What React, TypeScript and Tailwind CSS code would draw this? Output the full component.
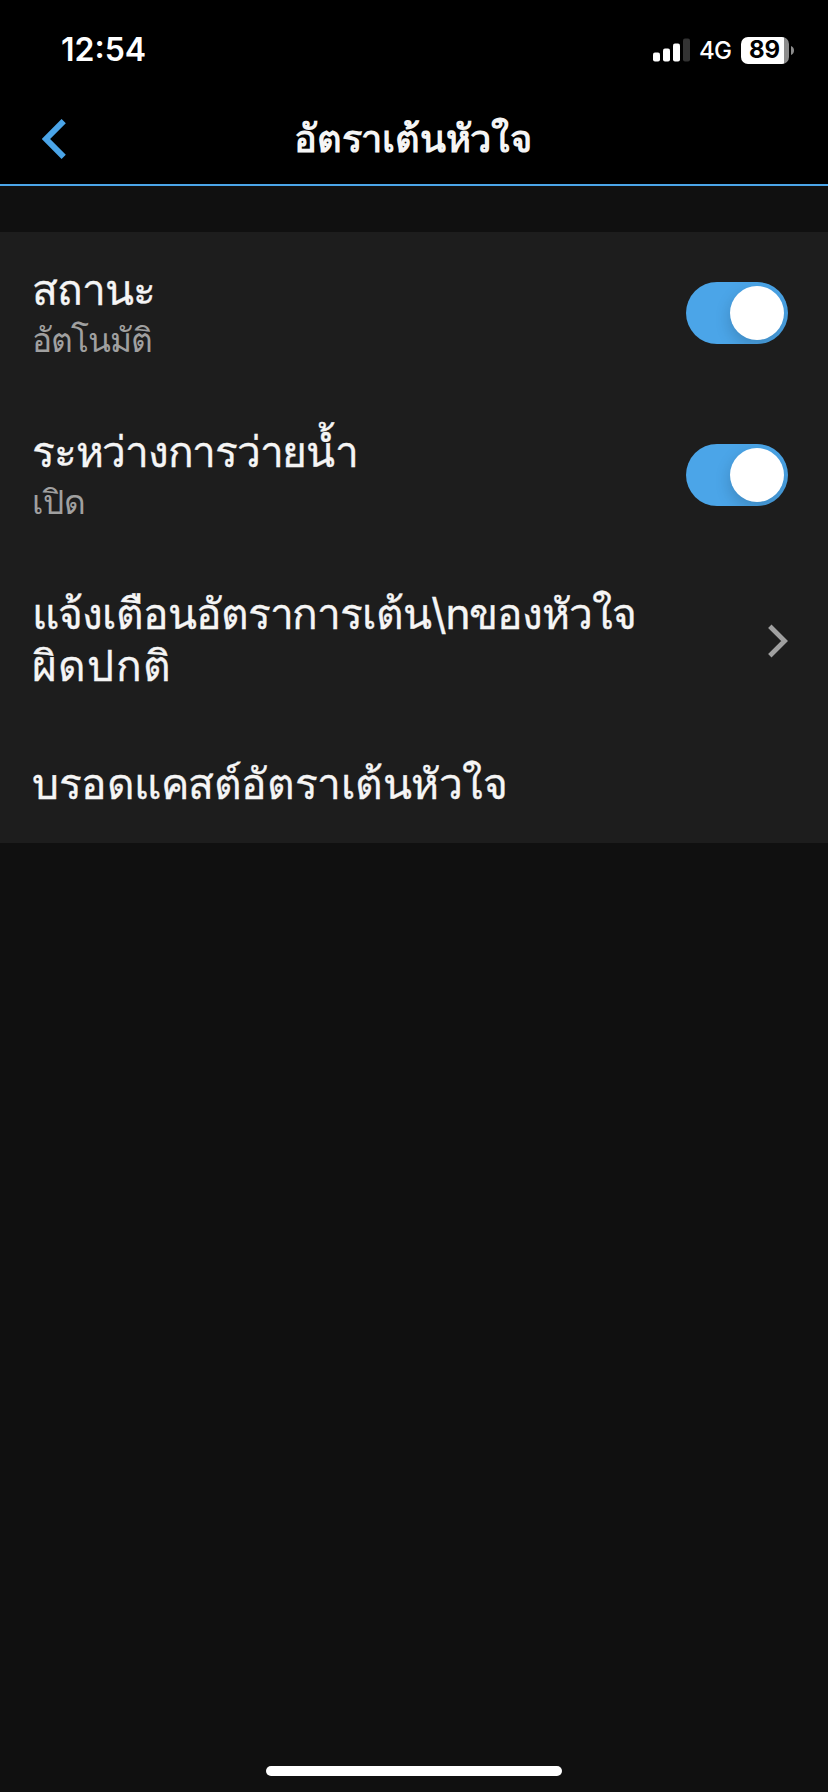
import type { ReactNode } from "react";

function StatusBar() {
  return (
    <div className="flex h-[94px] items-center justify-between pr-[34px] pl-[61px] pt-[6px]">
      <span className="text-[32px] leading-none font-semibold text-white">12:54</span>
      <div className="flex items-center">
        <svg className="block" width="37" height="24" viewBox="0 0 37 24">
          <rect x="0" y="14.5" width="7" height="9" rx="2" fill="#fff" />
          <rect x="10" y="10.5" width="7" height="13" rx="2" fill="#fff" />
          <rect x="20" y="5.5" width="7" height="18" rx="2" fill="#fff" />
          <rect x="30" y="0.5" width="7" height="23" rx="2" fill="#333" />
        </svg>
        <span className="ml-[9px] w-[33px] text-[24px] leading-none font-medium tracking-[-0.8px] text-white pt-[2px]">4G</span>
        <div className="ml-[9px] flex h-[27px] w-[48px] items-center overflow-hidden rounded-[7px] bg-[linear-gradient(to_right,#fff_43px,#8c8c8c_43px)] pl-[8px]">
          <span className="text-[24px] leading-none font-bold text-black">89</span>
        </div>
        <svg className="ml-[2px] block" width="3" height="9" viewBox="0 0 3 9">
          <path d="M0 0C4 1.5 4 7.5 0 9Z" fill="#8c8c8c" />
        </svg>
      </div>
    </div>
  );
}

function Header({ title }: { title: string }) {
  return (
    <header className="grid h-[90px] grid-cols-[120px_1fr_120px] items-center">
      <button className="pl-[42px]" aria-label="Back">
        <svg className="block" width="24" height="40" viewBox="0 0 24 40" fill="none">
          <path d="M21.7 2.2L4 20L21.7 37.8" stroke="#4ba5e8" strokeWidth="6" />
        </svg>
      </button>
      <h1 className="pr-[2px] pb-[2px] text-center text-[38px] leading-[52px] font-semibold tracking-[-0.2px] text-[#f5f5f5]">
        {title}
      </h1>
    </header>
  );
}

function Toggle() {
  return (
    <button
      role="switch"
      aria-checked="true"
      className="mt-[2px] flex h-[62px] w-[102px] shrink-0 justify-end overflow-hidden rounded-full bg-[#4ba5e8] p-[4px]"
    >
      <span className="block size-[54px] rounded-full bg-white shadow-[0_6px_16px_rgba(0,0,0,0.18)]" />
    </button>
  );
}

function Row({ title, subtitle, children }: { title: ReactNode; subtitle?: ReactNode; children?: ReactNode }) {
  return (
    <div className="flex items-center justify-between pt-[32px] pr-[40px] pb-[34px] pl-[32px]">
      <div className="text-[#f5f5f5]">
        <p className="text-[42.5px] leading-[52px] [-webkit-text-stroke:0.3px_#f5f5f5]">{title}</p>
        {subtitle && (
          <p className="pt-[4px] text-[33.5px] leading-[40px] text-[#a0a0a0]">{subtitle}</p>
        )}
      </div>
      {children}
    </div>
  );
}

export default function App() {
  return (
    <div className="flex h-[1792px] w-[828px] flex-col bg-[#101010] font-[Inter,sans-serif]">
      <div className="border-b-2 border-[#4ba5e8] bg-black">
        <StatusBar />
        <Header title="อัตราเต้นหัวใจ" />
      </div>

      <main className="mt-[46px] flex h-[611px] flex-col bg-[#1d1d1d]">
        <Row
          title={<span className="tracking-[-1.1px]">สถานะ</span>}
          subtitle={<span className="tracking-[-1.3px]">อัตโนมัติ</span>}
        >
          <Toggle />
        </Row>
        <Row title={<span className="tracking-[-1.25px]">ระหว่างการว่ายน้ำ</span>} subtitle="เปิด">
          <Toggle />
        </Row>
        <Row
          title={
            <>
              <span className="block tracking-[-1.05px]">{"แจ้งเตือนอัตราการเต้น\\nของหัวใจ"}</span>
              <span className="block tracking-[1.2px]">ผิดปกติ</span>
            </>
          }
        >
          <svg className="mt-[2px] block" width="20" height="34" viewBox="0 0 20 34" fill="none">
            <path d="M1.8 2.2L16.6 17L1.8 31.8" stroke="#a0a0a0" strokeWidth="4.8" />
          </svg>
        </Row>
        <Row title={<span className="tracking-[-0.45px]">บรอดแคสต์อัตราเต้นหัวใจ</span>} />
      </main>

      <div className="mx-auto mt-auto mb-[16px] h-[10px] w-[296px] rounded-full bg-white" />
    </div>
  );
}
